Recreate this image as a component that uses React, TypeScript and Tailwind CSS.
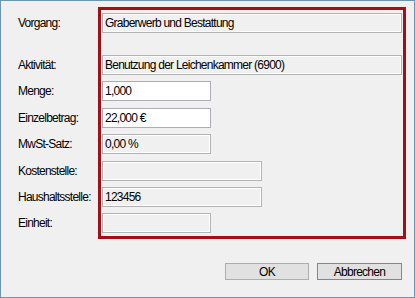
const rows = [
  { label: 'Vorgang:', value: 'Graberwerb und Bestattung', w: 'w-[300px]', mt: 'mt-[3px]', edit: false },
  { label: 'Aktivität:', value: 'Benutzung der Leichenkammer (6900)', w: 'w-[300px]', mt: 'mt-[22px]', edit: false },
  { label: 'Menge:', value: '1,000', w: 'w-[109px]', mt: 'mt-[6px]', edit: true },
  { label: 'Einzelbetrag:', value: '22,000 €', w: 'w-[109px]', mt: 'mt-[7px]', edit: true },
  { label: 'MwSt-Satz:', value: '0,00 %', w: 'w-[109px]', mt: 'mt-[6px]', edit: false },
  { label: 'Kostenstelle:', value: '', w: 'w-[160px]', mt: 'mt-[7px]', edit: false },
  { label: 'Haushaltsstelle:', value: '123456', w: 'w-[160px]', mt: 'mt-[6px]', edit: false },
  { label: 'Einheit:', value: '', w: 'w-[109px]', mt: 'mt-[6px]', edit: false },
];

export default function App() {
  return (
    <div className="w-[415px] h-[298px] bg-[#f0f0f0] border border-[#6d94b0] flex flex-col font-['Liberation_Sans',Arial,sans-serif] text-[12px] tracking-[-0.75px] text-black">
      <div className="flex pt-[6px]">
        <div className="w-[97px] pl-[17px] pt-[3px] flex flex-col">
          {rows.map((r) => (
            <div key={r.label} className={`${r.mt} h-[20px] flex items-center`}>
              {r.label}
            </div>
          ))}
        </div>
        <div className="w-[308px] h-[232px] border-[3px] border-[#a20f16] pl-[1px] flex flex-col">
          {rows.map((r) => (
            <div
              key={r.label}
              className={
                r.edit
                  ? `${r.mt} ${r.w} h-[20px] bg-white border border-[#abadb3] pl-[2px] flex items-center`
                  : `${r.mt} ${r.w} h-[20px] bg-[#f0f0f0] border border-[#b4b4b4] shadow-[inset_-1px_-1px_0_#ffffff,inset_1px_1px_0_#ffffff] pl-[2px] flex items-center`
              }
            >
              {r.value}
            </div>
          ))}
        </div>
      </div>
      <div className="mt-auto flex justify-end gap-[8px] pr-[12px] pb-[17px]">
        <button className="w-[84px] h-[17px] bg-[#e1e1e1] border border-[#adadad] flex items-center justify-center">
          OK
        </button>
        <button className="w-[85px] h-[17px] bg-[#e1e1e1] border border-[#3c99e6] flex items-center justify-center">
          Abbrechen
        </button>
      </div>
    </div>
  );
}
